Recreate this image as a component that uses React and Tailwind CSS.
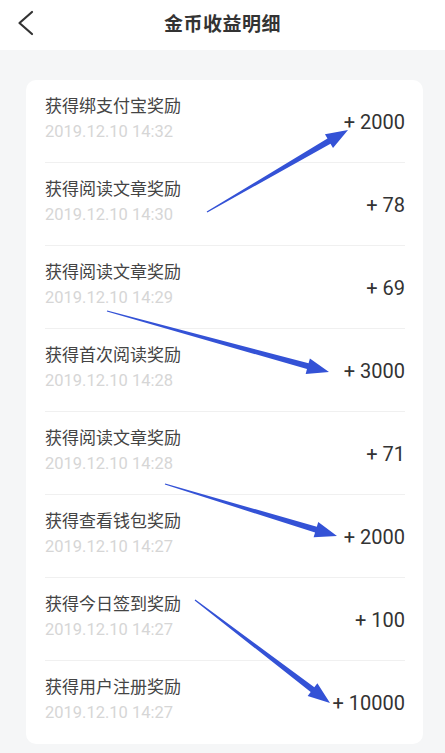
const records = [
  { title: "获得绑支付宝奖励", time: "2019.12.10 14:32", amount: "+ 2000" },
  { title: "获得阅读文章奖励", time: "2019.12.10 14:30", amount: "+ 78" },
  { title: "获得阅读文章奖励", time: "2019.12.10 14:29", amount: "+ 69" },
  { title: "获得首次阅读奖励", time: "2019.12.10 14:28", amount: "+ 3000" },
  { title: "获得阅读文章奖励", time: "2019.12.10 14:28", amount: "+ 71" },
  { title: "获得查看钱包奖励", time: "2019.12.10 14:27", amount: "+ 2000" },
  { title: "获得今日签到奖励", time: "2019.12.10 14:27", amount: "+ 100" },
  { title: "获得用户注册奖励", time: "2019.12.10 14:27", amount: "+ 10000" },
];

// annotation arrows drawn over the screenshot: [tail, tip]
const arrows = [
  [[207, 212], [348, 130]],
  [[107, 311], [329, 372]],
  [[165, 484], [337, 536]],
  [[195, 600], [330, 703]],
];

const arrowPoints = ([tx, ty], [px, py]) => {
  const len = Math.hypot(px - tx, py - ty);
  const dx = (px - tx) / len;
  const dy = (py - ty) / len;
  const nx = -dy;
  const ny = dx;
  const bx = px - dx * 22;
  const by = py - dy * 22;
  const pts = [
    [tx + nx * 0.6, ty + ny * 0.6],
    [bx + nx * 3, by + ny * 3],
    [bx + nx * 8, by + ny * 8],
    [px, py],
    [bx - nx * 8, by - ny * 8],
    [bx - nx * 3, by - ny * 3],
    [tx - nx * 0.6, ty - ny * 0.6],
  ];
  return pts.map((p) => p.join(",")).join(" ");
};

const App = () => {
  return (
    <div
      className="relative w-[445px] h-[753px] overflow-hidden bg-[#f5f6f7]"
      style={{ fontFamily: 'Roboto, "Noto Sans CJK SC", sans-serif' }}
    >
      {/* header */}
      <div className="relative flex items-center justify-center h-[50px] bg-white">
        <svg
          className="absolute left-[14px] top-[8px]"
          width="24"
          height="30"
          viewBox="0 0 24 30"
          fill="none"
        >
          <polyline
            points="18,4 5.5,15 18,26"
            stroke="#333"
            strokeWidth="2.2"
            strokeLinecap="round"
            strokeLinejoin="round"
          />
        </svg>
        <h1 className="text-[19px] font-semibold text-[#333] tracking-[0.5px]">
          金币收益明细
        </h1>
      </div>

      {/* list card */}
      <div className="mt-[30px] ml-[26px] w-[397px] bg-white rounded-[10px] pl-[19px] pr-[18px]">
        {records.map((r, i) => (
          <div
            key={i}
            className={`flex justify-between h-[83px] ${
              i < records.length - 1 ? "border-b border-[#f0f0f0]" : ""
            }`}
          >
            <div className="pt-[15px]">
              <div className="text-[17px] leading-[22px] text-[#444]">
                {r.title}
              </div>
              <div className="mt-[4px] text-[16.5px] leading-[22px] text-[#d6d6d6]">
                {r.time}
              </div>
            </div>
            <div className="pt-[30px] text-[20px] leading-[25px] text-[#333]">
              {r.amount}
            </div>
          </div>
        ))}
      </div>

      {/* arrows */}
      <svg
        className="absolute left-0 top-0 pointer-events-none"
        width="445"
        height="753"
      >
        {arrows.map(([t, p], i) => (
          <polygon key={i} points={arrowPoints(t, p)} fill="#3452d6" />
        ))}
      </svg>
    </div>
  );
};

export default App;
